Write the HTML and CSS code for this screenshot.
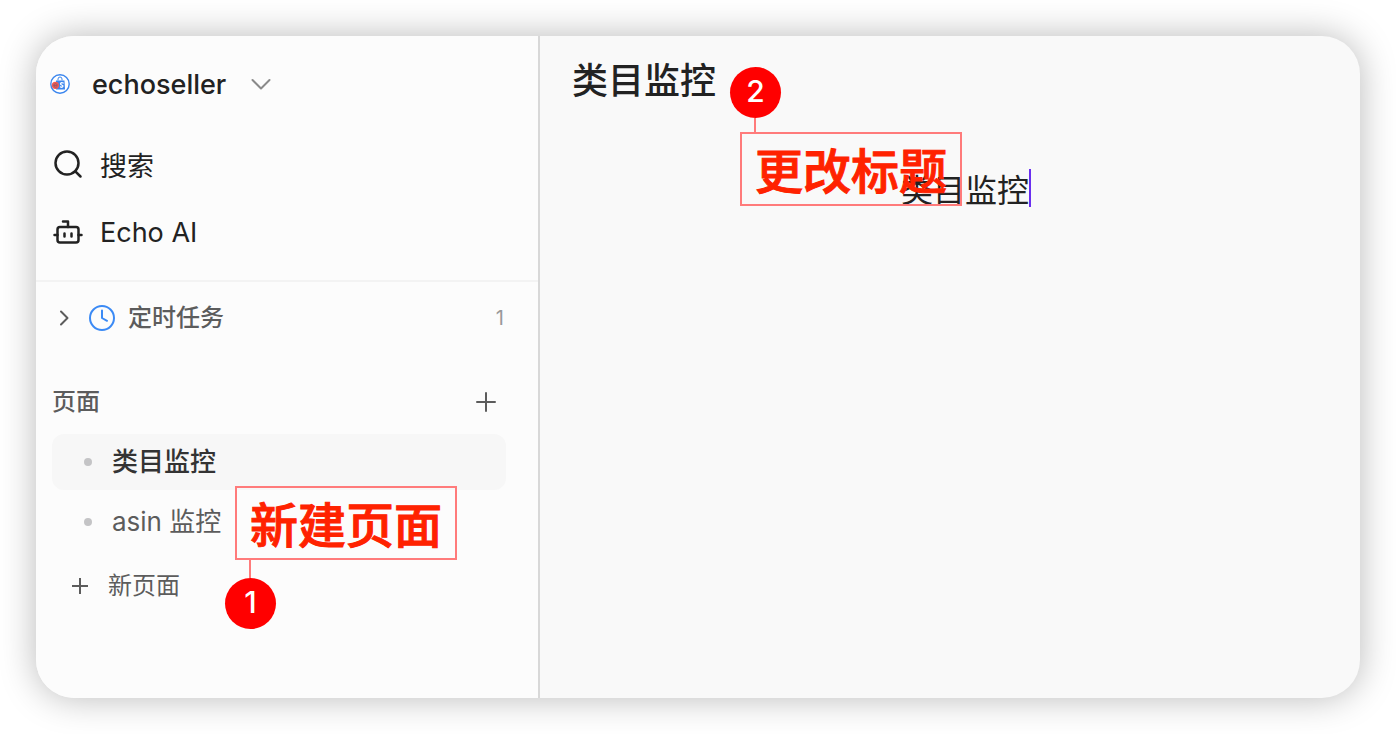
FILE: index.html
```
<!DOCTYPE html>
<html lang="zh-CN">
<head>
    <meta charset="UTF-8">
    <meta name="viewport" content="width=device-width, initial-scale=1.0">
    <title>类目监控 - echoseller</title>
    <link rel="stylesheet" href="styles.css">
</head>
<body>

    <div class="window">
        <aside class="sidebar">
            <div class="sidebar-top">
                <button class="team">
                    <svg class="logo" viewBox="0 0 20 20">
                        <circle cx="10" cy="10" r="9.2" fill="#fff" stroke="#3b86ee" stroke-width="1.4"/>
                        <path d="M8 6V5a2 2 0 0 1 4 0v1" stroke="#3b86ee" stroke-width="1"/>
                        <path d="M6 6.500h8.500l.5 9H6z" fill="#3b86ee"/>
                        <path d="M13.200 9c-2.600-1.200-3.600 1.400-1.500 2s1.300 3-1.300 1.900" stroke="#fff" stroke-width="1.300"/>
                        <circle cx="5.400" cy="11.300" r="3.600" fill="#f25a52"/>
                        <path d="M3.900 11.400h3.300c0-2.300-3.300-2.300-3.300 0s2.200 2.200 3.200 1.200" stroke="#8a5566" stroke-width=".8"/>
                    </svg>
                    <span class="team-name">echoseller</span>
                    <svg class="chevron" viewBox="0 0 20 20"><path d="M1.500 6l8.500 8.500L18.500 6"/></svg>
                </button>
                <button class="menu-item">
                    <svg class="icon" viewBox="0 0 32 32"><circle cx="15" cy="15" r="11.500"/><path d="M23.300 23.300L28.500 28.500"/></svg>
                    搜索
                </button>
                <button class="menu-item">
                    <svg class="icon" viewBox="0 0 32 32"><rect x="5.500" y="11" width="21" height="15.500" rx="2.500"/><path d="M16 11V5.500h-5M2.500 19h3M26.500 19h3M12.500 17.500v3M19.500 17.500v3"/></svg>
                    Echo AI
                </button>
            </div>

            <button class="task-row">
                <svg class="arrow" viewBox="0 0 16 16"><path d="M5 1.500L11.500 8 5 14.500"/></svg>
                <svg class="clock" viewBox="0 0 28 28"><circle cx="14" cy="14" r="12"/><path d="M14 6.500V14l5 2.800"/></svg>
                <span class="task-name">定时任务</span>
                <span class="count">1</span>
            </button>

            <div class="pages">
                <div class="pages-head">
                    <h2>页面</h2>
                    <button class="add" aria-label="新建页面">
                        <svg class="plus" viewBox="0 0 20 20"><path d="M10 1v18M1 10h18"/></svg>
                    </button>
                </div>
                <a href="#" class="page active"><span class="dot"></span>类目监控</a>
                <a href="#" class="page"><span class="dot"></span>asin 监控</a>
                <button class="new-page">
                    <svg class="plus small" viewBox="0 0 16 16"><path d="M8 0v16M0 8h16"/></svg>
                    新页面
                </button>
                <div class="callout callout-new">
                    <span class="callout-text">新建页面</span>
                    <span class="step">1</span>
                </div>
            </div>
        </aside>

        <main class="editor">
            <h1>类目监控</h1>
            <div class="title-edit">
                <input type="text" value="类目监控" aria-label="标题">
                <span class="caret"></span>
            </div>
            <div class="callout callout-title">
                <span class="callout-text">更改标题</span>
                <span class="step">2</span>
            </div>
        </main>
    </div>

</body>
</html>
```

FILE: styles.css
```
* {
    box-sizing: border-box;
}

body {
    margin: 0;
    padding: 36px;
    height: 100vh;
    background: #fff;
    color: #222;
    font-family: Inter, "Noto Sans CJK SC", sans-serif;
    font-size: 27px;
}

button, input {
    border: none;
    background: none;
    padding: 0;
    margin: 0;
    color: inherit;
    font: inherit;
    text-align: left;
}

button {
    cursor: pointer;
}

svg {
    flex: none;
    fill: none;
    stroke: currentColor;
    stroke-linecap: round;
    stroke-linejoin: round;
}

.window {
    display: flex;
    min-height: 100%;
    border-radius: 38px;
    background: #f9f9f9;
    box-shadow: 0 0 36px rgba(0, 0, 0, 0.28);
}

/* sidebar */
.sidebar {
    flex: none;
    width: 504px;
    background: #fcfcfc;
    border-right: 2px solid #d8d8d8;
    border-radius: 38px 0 0 38px;
}

.sidebar-top {
    padding: 16px 16px 14px;
    border-bottom: 2px solid #f3f3f3;
}

.team {
    display: flex;
    align-items: center;
    height: 64px;
    margin-bottom: 14px;
    font-weight: 500;
}

.logo {
    width: 20px;
    height: 20px;
    margin: 0 22px 0 -2px;
    stroke: none;
}

.chevron {
    width: 20px;
    height: 20px;
    margin-left: 25px;
    color: #8a8a8a;
    stroke-width: 2;
}

.menu-item {
    display: flex;
    align-items: center;
    gap: 16px;
    width: 100%;
    height: 68px;
}

.icon {
    width: 32px;
    height: 32px;
    stroke-width: 2.5;
}

.task-row {
    display: flex;
    align-items: center;
    width: 100%;
    height: 72px;
    padding: 0 34px 0 20px;
    color: #5c5c5c;
    font-size: 24px;
}

.arrow {
    width: 16px;
    height: 16px;
    stroke-width: 2;
}

.clock {
    width: 28px;
    height: 28px;
    margin: 0 12px 0 16px;
    color: #3b8af5;
    stroke-width: 2;
}

.task-name, .pages-head h2 {
    font-size: 24px;
    font-weight: 500;
    line-height: 34px;
}

.count {
    margin-left: auto;
    color: #999;
    font-size: 20px;
}

.pages {
    position: relative;
    padding: 16px 32px 0 16px;
    color: #5c5c5c;
}

.pages-head {
    display: flex;
    align-items: center;
    justify-content: space-between;
    height: 64px;
    padding-right: 10px;
}

.pages-head h2 {
    margin: 0;
}

.add {
    display: flex;
}

.plus {
    width: 20px;
    height: 20px;
    stroke-width: 2;
}

.plus.small {
    width: 16px;
    height: 16px;
}

.page {
    display: flex;
    align-items: center;
    height: 56px;
    margin-bottom: 4px;
    padding-left: 32px;
    border-radius: 12px;
    color: inherit;
    font-size: 26px;
    line-height: 34px;
    text-decoration: none;
}

.page.active {
    background: #f7f7f7;
    color: #333;
    font-weight: 500;
}

.dot {
    width: 8px;
    height: 8px;
    margin-right: 20px;
    border-radius: 50%;
    background: #c4c4c6;
}

.new-page {
    display: flex;
    align-items: center;
    gap: 20px;
    height: 64px;
    padding-left: 20px;
    font-size: 24px;
    line-height: 34px;
}

/* editor */
.editor {
    position: relative;
    flex: 1;
    padding: 16px 0 0 32px;
}

h1 {
    margin: 0;
    font-size: 36px;
    font-weight: 500;
    line-height: 58px;
}

.title-edit {
    display: flex;
    justify-content: center;
    align-items: center;
    margin-top: 58px;
    font-size: 32px;
}

.title-edit input {
    width: 128px;
    height: 40px;
    outline: none;
}

.caret {
    width: 2px;
    height: 38px;
    background: #6a2ff0;
}

/* red step markers that float over the page */
.callout {
    position: absolute;
    border: 2px solid #ff7b7b;
    padding: 6px 13px 0;
    color: #ff2200;
    font-size: 48px;
    font-weight: 500;
    line-height: 64px;
    white-space: nowrap;
    pointer-events: none;
}

.callout-text {
    display: block;
    -webkit-text-stroke: 1px #ff2200;
}

.callout-new {
    top: 132px;
    left: 199px;
}

.callout-title {
    top: 96px;
    left: 200px;
}

.step {
    position: absolute;
    left: -12px;
    width: 51px;
    height: 51px;
    border-radius: 50%;
    background: #f00;
    color: #fff;
    font-size: 30px;
    line-height: 48px;
    text-align: center;
}

.step::before {
    content: "";
    position: absolute;
    left: 24px;
    width: 2px;
    height: 18px;
    background: #ff7b7b;
}

.callout-new .step {
    top: 90px;
}

.callout-new .step::before {
    bottom: 51px;
}

.callout-title .step {
    bottom: 86px;
}

.callout-title .step::before {
    top: 51px;
    height: 15px;
}
```
